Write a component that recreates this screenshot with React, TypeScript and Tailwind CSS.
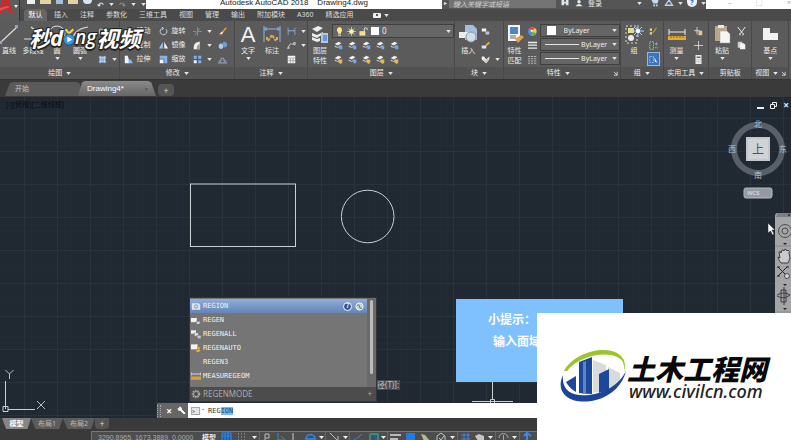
import { useEffect, useRef, type ReactNode } from "react";

// small ribbon glyphs, all on a 12x12 grid
const glyphs: Record<string, ReactNode> = {
  rect: <path d="M2 3h8v6H2z" fill="none" stroke="#d5d9dd" />,
  hatch: (
    <>
      <path d="M2 2h8v8H2z" fill="#8fb2e6" />
      <path d="M1 3h10M1 9h10M3 1v10M9 1v10" stroke="#dbe6f7" strokeWidth=".8" />
    </>
  ),
  ellipse: <ellipse cx="6" cy="6" rx="5" ry="3" fill="none" stroke="#d5d9dd" />,
  move: <path d="M6 1v10M1 6h10M4 3l2-2 2 2M4 9l2 2 2-2" fill="none" stroke="#cfe0f2" />,
  copy: (
    <>
      <circle cx="4" cy="5" r="3" fill="none" stroke="#cfd4da" />
      <circle cx="8" cy="7" r="3" fill="none" stroke="#8ab4ea" />
    </>
  ),
  stretch: (
    <>
      <path d="M1 1h4l2 7v3H1z" fill="#f0f4f8" />
      <path d="M6 6h3l3 5H6z" fill="#8ab8ef" />
    </>
  ),
  rotate: <path d="M9.500 3A4.500 4.500 0 1 1 5 1.500M3.500 0l2.500 1.500L4 4" fill="none" stroke="#c9d8e6" strokeWidth="1.200" />,
  mirror: (
    <>
      <path d="M5 1v9H0z" fill="#9cc3f2" />
      <path d="M7 1v9h5z" fill="#eef2f6" />
    </>
  ),
  scale: (
    <>
      <path d="M1 1h10v10H7V5H1z" fill="#86b1e8" />
      <path d="M1 6h5v5H1z" fill="#f2f5f8" />
    </>
  ),
  trim: <path d="M0 6h4M7 6h5M6 0v12M2 11L9 2" fill="none" stroke="#78a7df" strokeWidth=".9" />,
  fillet: (
    <>
      <path d="M1 11V8a7 7 0 0 1 7-7h1v10z" fill="#f1f1f1" />
      <path d="M5 11V8a5 5 0 0 1 4-4v7z" fill="#9a9a9a" />
    </>
  ),
  array: (
    <>
      <path d="M1 1h4v4H1zM7 1h4v4H7zM7 7h4v4H7z" fill="#7fb0f0" />
      <path d="M1 7h4v4H1z" fill="#e8f0fa" />
    </>
  ),
  erase: (
    <>
      <path d="M5 8l6-7" stroke="#e0a03a" strokeWidth="2" />
      <path d="M2 9l3-3 2 2-3 2z" fill="#f1e6d0" />
      <path d="M0 11h7" stroke="#e2473c" />
    </>
  ),
  explode: (
    <>
      <path d="M1 5l3-2 3 2v4l-3 2-3-2z" fill="#a8cbf1" />
      <path d="M6 2l3-1 3 2v4l-4 2z" fill="#6d9dd4" />
    </>
  ),
  offset: <path d="M0 10.500h12M1 8h3V6a2 2 0 1 1 4 0v2h3" fill="none" stroke="#a5b8d0" strokeWidth="1.300" />,
  linear: <path d="M1.500 1v10M10.500 1v10M2 5h8M3 4v2M9 4v2" stroke="#8fb9ec" fill="none" />,
  leader: <path d="M1 10l3-6h6M2 7l-1 3 3-1M9 2h2v3H9z" stroke="#dedede" fill="none" />,
  table: (
    <>
      <path d="M1 1h10v10H1z" fill="#f6f6f6" />
      <path d="M1 4h10M1 7.500h10M4.500 4v7M8 4v7" stroke="#777" strokeWidth=".7" />
    </>
  ),
  bulb: (
    <>
      <path d="M6 0a4 4 0 0 1 2 7v2H4V7a4 4 0 0 1 2-7z" fill="#ffe487" />
      <path d="M4 10h4v2H4z" fill="#b6c0cc" />
    </>
  ),
  sun: (
    <>
      <path d="M6 0v12M0 6h12M2 2l8 8M10 2l-8 8" stroke="#d8d8cd" />
      <circle cx="6" cy="6" r="3" fill="#fff5a7" />
    </>
  ),
  lock: (
    <>
      <path d="M7 6V3a2 2 0 0 1 4 0v1" fill="none" stroke="#e8e8e8" strokeWidth="1.300" />
      <path d="M1 6h7v5H1z" fill="#f5dd7b" stroke="#fff" strokeWidth=".6" />
    </>
  ),
  layerBlue: (
    <>
      <path d="M1 4l5-3 4 2-5 3z" fill="#f1f1f1" />
      <path d="M1 6l4 2 3-2v2L5 9 1 8z" fill="#c7ccd2" />
      <path d="M7 6h4v5H7z" fill="#76a9e6" />
    </>
  ),
  layerGold: (
    <>
      <path d="M1 4l5-3 4 2-5 3z" fill="#f1f1f1" />
      <path d="M1 6l4 2 3-2v2L5 9 1 8z" fill="#c7ccd2" />
      <path d="M6 6h5v4l-2 2-3-2z" fill="#eab94e" />
    </>
  ),
  blockNew: (
    <>
      <path d="M1 2h6v4H1z" fill="#f3f3f3" />
      <path d="M6 6h5v4H6z" fill="#b9c5d3" />
    </>
  ),
  blockEdit: (
    <>
      <path d="M1 6h6v4H1z" fill="#d7e3f1" />
      <path d="M5 6l5-5 2 2-5 4z" fill="#e8ae45" />
    </>
  ),
  blockAttr: (
    <>
      <path d="M1 2h3l3 4 4-4v4l-4 5-6-5z" fill="#f0f0f0" />
      <path d="M4 6l3 3 3-4" fill="none" stroke="#c98a34" />
    </>
  ),
  color: (
    <>
      <circle cx="6" cy="6" r="5.500" fill="#e9d44b" />
      <path d="M6 6L1 3A5.500 5.500 0 0 1 9 1.300z" fill="#e64c43" />
      <path d="M6 6v5.500A5.500 5.500 0 0 1 1 3z" fill="#4a8de2" />
      <path d="M6 6v5.500a5.500 5.500 0 0 0 5-3z" fill="#56b353" />
      <circle cx="5" cy="5" r="1.500" fill="#fff" />
    </>
  ),
  weight: <path d="M0 2h12M0 5.500h12M0 9.500h12" stroke="#efefef" strokeWidth="1.700" />,
  ltype: <path d="M0 2h12M0 5h12M0 8h12M0 11h12" stroke="#d0d0d0" strokeDasharray="3 1" strokeWidth="1" />,
  groupEdit: (
    <>
      <path d="M1 2h3v3H1zM1 7h3v3H1z" fill="#e7dc93" />
      <path d="M5 8l5-7" stroke="#d7a13c" strokeWidth="1.500" />
    </>
  ),
  groupBox: <path d="M1 1h5v10H1zM8 4h4M10 2v4M8 9h4" fill="none" stroke="#c3cad2" strokeDasharray="2 1" />,
  groupSel: (
    <>
      <path d="M1 2h5v8H1z" fill="none" stroke="#d8e8fb" strokeDasharray="1 1" />
      <path d="M7 3l4 7-3-1z" fill="#eef5ff" />
    </>
  ),
  pick: (
    <>
      <path d="M4 0v10M0 5h8" stroke="#eee" />
      <path d="M6 5h5v6H6z" fill="#e5c58c" />
    </>
  ),
  cross: <path d="M6 0v12M0 6h12" stroke="#e8e8e8" />,
  calc: (
    <>
      <path d="M2 0h8v12H2z" fill="#eaeaea" />
      <path d="M3.500 2h5v2h-5z" fill="#6a6a6a" />
      <path d="M3.500 6.500h5M3.500 9h5" stroke="#888" strokeDasharray="1 1" />
    </>
  ),
  cut: (
    <>
      <path d="M1 0l6 8M11 0L5 8" stroke="#f0f0f0" strokeWidth="1.300" />
      <path d="M3 8h2v3H3zM7 8h2v3H7z" fill="#d0d0d0" />
    </>
  ),
  clip: (
    <>
      <path d="M1 1h6v8H1z" fill="#cfcfcf" />
      <path d="M4 3h5l2 2v6H4z" fill="#f3f3f3" />
    </>
  ),
};

function Glyph({ name, className = "size-[9px]" }: { name: string; className?: string }) {
  return (
    <svg viewBox="0 0 12 12" className={`shrink-0 ${className}`} aria-hidden="true">
      {glyphs[name]}
    </svg>
  );
}

function Caret({ className = "" }: { className?: string }) {
  return (
    <svg viewBox="0 0 6 4" className={`h-[3px] w-[5px] shrink-0 ${className}`} aria-hidden="true">
      <path d="M0 0h6L3 4z" fill="#e6e6e6" />
    </svg>
  );
}

function Tool({
  icon,
  label,
  width,
  caret,
}: {
  icon: ReactNode;
  label: string[];
  width: string;
  caret?: boolean;
}) {
  return (
    <button type="button" className={`flex shrink-0 flex-col items-center ${width}`}>
      <svg viewBox="0 0 20 20" className="mb-0.5 size-5 shrink-0" aria-hidden="true">
        {icon}
      </svg>
      {label.map((line) => (
        <span key={line} className="leading-[10px] whitespace-nowrap">
          {line}
        </span>
      ))}
      {caret && <Caret className="mt-px" />}
    </button>
  );
}

function Mini({ name, label, caret }: { name: string; label?: string; caret?: boolean }) {
  return (
    <button
      type="button"
      aria-label={label ?? name}
      className="flex h-3.5 items-center gap-[3px] whitespace-nowrap"
    >
      <Glyph name={name} />
      {label && <span>{label}</span>}
      {caret && <Caret className="ml-0.5" />}
    </button>
  );
}

function Panel({
  title,
  grow,
  caret = true,
  launcher,
  children,
}: {
  title: string;
  grow: string;
  caret?: boolean;
  launcher?: boolean;
  children: ReactNode;
}) {
  return (
    <section className={`flex min-w-0 flex-col border-r border-[#484848] ${grow}`}>
      <div className="flex h-[47px] pt-[3px]">{children}</div>
      <div className="flex h-3 items-center bg-[#525252]">
        <span className="flex flex-1 items-center justify-center gap-1 whitespace-nowrap">
          {title}
          {caret && <Caret />}
        </span>
        {launcher && (
          <svg viewBox="0 0 6 6" className="mr-0.5 size-[5px] shrink-0" aria-hidden="true">
            <path d="M1 1l4 4M5 1v4H1" fill="none" stroke="#e6e6e6" />
          </svg>
        )}
      </div>
    </section>
  );
}

function PropertySelect({ label, swatch }: { label: string; swatch?: boolean }) {
  return (
    <div className="mb-px flex h-[13px] items-center gap-0.5 border border-[#3f3f3f] bg-[#656565] pr-0.5 pl-1">
      {swatch ? (
        <span className="ml-0.5 size-[9px] shrink-0 bg-white" />
      ) : (
        <span className="h-px flex-1 bg-[#e4e4e4]" />
      )}
      <select
        aria-label={label}
        className={`appearance-none bg-transparent text-[7px] outline-none ${swatch ? "flex-1 pl-1.5" : "mr-0.5"}`}
      >
        <option>ByLayer</option>
      </select>
      <Caret />
    </div>
  );
}

function TitleBar() {
  return (
    <header className="flex h-[9px] overflow-hidden bg-white">
      <div className="flex w-[146px] shrink-0 items-center gap-[5px] bg-[#545454] pl-[27px]">
        <span className="h-1 w-2 self-start bg-[#f0f0f0]" />
        <span className="h-1 w-3 self-start bg-[#e2d3a4]" />
        <span className="h-1 w-2 self-start bg-[#a7c0da]" />
        <span className="h-1 w-2.5 self-start bg-[#e2d3a4]" />
        <span className="h-1 w-2.5 self-start rounded-b bg-[#d6e4f2]" />
        <span className="text-[8px] leading-[6px] text-white">↶</span>
        <Caret />
        <span className="text-[8px] leading-[6px] text-[#999]">↷</span>
        <Caret />
        <Caret />
      </div>
      <h1 className="flex-1 text-center font-['Liberation_Sans',sans-serif] text-[8px] leading-[6px] whitespace-pre text-[#222]">
        {"Autodesk AutoCAD 2018    Drawing4.dwg"}
      </h1>
      <div className="flex w-[264px] shrink-0 bg-[#555]">
        <span className="w-[7px] text-center text-[6px] leading-[6px]">▸</span>
        <input
          aria-label="搜索"
          placeholder="键入关键字或短语"
          className="h-2 w-[107px] bg-[#747474] px-1 text-[7px] leading-[6px] italic outline-none placeholder:text-[#d0d0d0]"
        />
        <div className="flex flex-1 items-start gap-1 pl-1 leading-[7px]">
          <svg viewBox="0 0 10 8" className="h-[7px] w-2.5 shrink-0" aria-hidden="true">
            <path d="M1 0h3v6H1zM6 0h3v6H6zM4 2h2v2H4z" fill="#dce4ec" />
          </svg>
          <svg viewBox="0 0 10 8" className="h-[7px] w-2.5 shrink-0" aria-hidden="true">
            <circle cx="5" cy="2" r="2" fill="#e4eaf0" />
            <path d="M1 7q4-5 8 0z" fill="#e4eaf0" />
          </svg>
          <a href="#login" className="flex-1 whitespace-nowrap">
            登录
          </a>
          <Caret className="mt-0.5" />
          <svg viewBox="0 0 10 8" className="ml-1 h-[7px] w-2.5 shrink-0" aria-hidden="true">
            <path d="M1 0h8L8 4H3zM3 5h2v2H3zM6 5h2v2H6z" fill="#c5daf0" />
          </svg>
          <svg viewBox="0 0 10 8" className="h-[7px] w-2.5 shrink-0" aria-hidden="true">
            <path d="M5 0L1 6h8z" fill="none" stroke="#b8d4f2" strokeWidth="1.500" />
          </svg>
          <Caret className="mt-0.5" />
          <span className="h-[7px] w-2.5 shrink-0 rounded-b-full bg-[#eef4fa] text-center text-[7px] leading-[6px] font-bold text-[#2565a8]">
            ?
          </span>
          <Caret className="mt-0.5" />
        </div>
      </div>
      <div className="flex w-[85px] shrink-0 items-start justify-between pl-[22px] text-[7px] leading-[6px] text-[#aaa]">
        <span>–</span>
        <span>□</span>
        <span>×</span>
      </div>
    </header>
  );
}

function RibbonTabs() {
  const tabs = ["插入", "注释", "参数化", "三维工具", "视图", "管理", "输出", "附加模块", "A360", "精选应用"];
  return (
    <nav className="flex h-3 items-center bg-[#4a4a4a] pl-6">
      <a href="#home" className="mr-[7px] h-3 w-[23px] rounded-t-sm bg-[#666] text-center leading-[12px] text-white">
        默认
      </a>
      <div className="flex items-center gap-3">
        {tabs.map((tab) => (
          <a key={tab} href="#tab" className="leading-[12px] whitespace-nowrap text-[#dcdcdc]">
            {tab}
          </a>
        ))}
      </div>
      <span className="ml-[19px] flex items-center gap-[3px]">
        <span className="flex h-[5px] w-2 items-center justify-center rounded-[1px] bg-[#eee]">
          <span className="size-0.5 bg-[#555]" />
        </span>
        <Caret />
      </span>
    </nav>
  );
}

function Ribbon() {
  return (
    <div className="flex h-[59px] border-b border-[#333] bg-[#5b5b5b] pr-0.5 text-[#ececec]">
      <Panel title="绘图" grow="flex-[121_1_0%]">
        <Tool
          width="w-[18px]"
          label={["直线"]}
          icon={
            <>
              <path d="M2 18L18 3" stroke="#ddd" strokeWidth="1.200" />
              <path d="M0 17h3v3H0zM16 1h3v3h-3z" fill="#7fa9dc" />
            </>
          }
        />
        <Tool
          width="w-[30px]"
          label={["多段线"]}
          icon={<path d="M1 15h9q7-1 3-8L8 3" fill="none" stroke="#ddd" strokeWidth="1.200" />}
        />
        <Tool
          width="w-[18px]"
          label={["圆"]}
          caret
          icon={<circle cx="10" cy="10" r="8" fill="none" stroke="#ddd" />}
        />
        <Tool
          width="w-[28px]"
          label={["圆弧"]}
          caret
          icon={<path d="M2 18Q3 5 18 3" fill="none" stroke="#ddd" strokeWidth="1.200" />}
        />
        <div className="flex flex-col pl-1">
          <Mini name="rect" caret />
          <Mini name="ellipse" caret />
          <Mini name="hatch" caret />
        </div>
      </Panel>
      <Panel title="修改" grow="flex-[115_1_0%]">
        <div className="flex w-[37px] shrink-0 flex-col pl-1">
          <Mini name="move" label="移动" />
          <Mini name="copy" label="复制" />
          <Mini name="stretch" label="拉伸" />
        </div>
        <div className="flex w-[36px] shrink-0 flex-col pl-0.5">
          <Mini name="rotate" label="旋转" />
          <Mini name="mirror" label="镜像" />
          <Mini name="scale" label="缩放" />
        </div>
        <div className="flex w-[25px] shrink-0 flex-col">
          <Mini name="trim" caret />
          <Mini name="fillet" caret />
          <Mini name="array" caret />
        </div>
        <div className="flex flex-col">
          <Mini name="erase" />
          <Mini name="explode" />
          <Mini name="offset" />
        </div>
      </Panel>
      <Panel title="注释" grow="flex-[73_1_0%]">
        <Tool
          width="w-[26px]"
          label={["文字"]}
          caret
          icon={
            <text x="10" y="18" textAnchor="middle" fontSize="22" fill="#f4f4f4" fontFamily="Liberation Sans, sans-serif">
              A
            </text>
          }
        />
        <Tool
          width="w-[22px]"
          label={["标注"]}
          icon={
            <>
              <path d="M2 2v16M18 2v16M2 5h16M4 3v4M16 3v4" fill="none" stroke="#8db5e6" />
              <path d="M6 17l4-6 4 6M5 13v3M15 13v3" fill="none" stroke="#e3a948" strokeWidth="2" strokeDasharray="3 1" />
            </>
          }
        />
        <div className="flex flex-col pl-1">
          <Mini name="linear" caret />
          <Mini name="leader" caret />
          <Mini name="table" />
        </div>
      </Panel>
      <Panel title="图层" grow="flex-[148_1_0%]">
        <Tool
          width="w-[24px]"
          label={["图层", "特性"]}
          icon={
            <>
              <path d="M2 5l6-3 5 2-6 4zM2 9l5 2 6-3v2l-6 4-5-2zM2 13l5 2 3-1v3l-3 1-5-2z" fill="#ededed" />
              <path d="M11 9h7v10h-7z" fill="#a9c9ef" />
              <path d="M13 12h4M13 14h4M13 16h4" stroke="#35659e" />
            </>
          }
        />
        <div className="min-w-0 flex-1">
          <div className="flex h-3.5 items-center gap-[3px] border border-[#404040] bg-[#666] px-0.5">
            <Glyph name="bulb" />
            <Glyph name="sun" />
            <Glyph name="lock" />
            <span className="size-2 bg-white" />
            <select aria-label="图层" className="flex-1 appearance-none bg-transparent text-[8px] outline-none">
              <option>0</option>
            </select>
            <Caret />
          </div>
          {["状态", "编辑"].map((row, i) => (
            <div key={row} className="flex gap-[5px] pl-0.5">
              {[0, 1, 2, 3, 4].map((n) => (
                <Mini key={n} name={i === 1 && n !== 1 ? "layerGold" : "layerBlue"} />
              ))}
            </div>
          ))}
        </div>
      </Panel>
      <Panel title="块" grow="flex-[48_1_0%]">
        <Tool
          width="w-[26px]"
          label={["插入"]}
          icon={
            <>
              <path d="M7 1h8l4 4v11H7z" fill="#a3bfdb" />
              <path d="M1 8h10v6H1z" fill="#e8edf2" />
              <circle cx="13" cy="13" r="5" fill="#d3dde7" stroke="#8599ad" />
            </>
          }
        />
        <div className="flex flex-col">
          <Mini name="blockNew" />
          <Mini name="blockEdit" />
          <Mini name="blockAttr" caret />
        </div>
      </Panel>
      <Panel title="特性" grow="flex-[118_1_0%]" launcher>
        <Tool
          width="w-[22px]"
          label={["特性", "匹配"]}
          icon={
            <>
              <path d="M3 1h12v16H3z" fill="#f2f4f6" />
              <path d="M5 3h8v7H5z" fill="#4b86c8" />
              <path d="M5 12h6M5 14h6" stroke="#666" />
              <path d="M10 15l6-4 3 2-6 6z" fill="#d9a24b" />
            </>
          }
        />
        <div className="flex w-[14px] shrink-0 flex-col items-center">
          <Mini name="color" />
          <Mini name="weight" />
          <Mini name="ltype" />
        </div>
        <div className="min-w-0 flex-1">
          <PropertySelect label="对象颜色" swatch />
          <PropertySelect label="线宽" />
          <PropertySelect label="线型" />
        </div>
      </Panel>
      <Panel title="组" grow="flex-[42_1_0%]">
        <Tool
          width="w-[26px]"
          label={["组"]}
          icon={
            <>
              <path d="M2 2h11v17H2z" fill="none" stroke="#ddd" strokeDasharray="2 2" />
              <path d="M4 4h6v5H4z" fill="#e6dc8e" />
              <circle cx="7" cy="14" r="3" fill="#eee" />
              <path d="M14 1v12M8 7h12M10 3l8 8M18 3l-8 8" stroke="#a9d6fb" />
              <circle cx="14" cy="7" r="2" fill="#fff" />
            </>
          }
        />
        <div className="flex flex-col items-center">
          <Mini name="groupEdit" />
          <Mini name="groupBox" />
          <span className="flex h-3.5 w-[13px] items-center justify-center border border-[#8fb9ea] bg-[#3d74b8]">
            <Mini name="groupSel" />
          </span>
        </div>
      </Panel>
      <Panel title="实用工具" grow="flex-[45_1_0%]">
        <Tool
          width="w-[26px]"
          label={["测量"]}
          caret
          icon={
            <>
              <path d="M2 5v6M18 5v6M2 8h16" stroke="#f0f0f0" fill="none" />
              <path d="M1 12h18v4H1z" fill="#e5a92f" />
              <path d="M4 12v2M7 12v2M10 12v2M13 12v2M16 12v2" stroke="#8d6415" />
            </>
          }
        />
        <div className="flex flex-col pl-1">
          <Mini name="pick" />
          <Mini name="cross" />
          <Mini name="calc" />
        </div>
      </Panel>
      <Panel title="剪贴板" grow="flex-[43_1_0%]" caret={false}>
        <Tool
          width="w-[26px]"
          label={["粘贴"]}
          caret
          icon={
            <>
              <path d="M3 2h12v15H3z" fill="#b9a78d" />
              <path d="M6 1h6v3H6z" fill="#e8e8e8" />
              <path d="M8 7h7l3 3v9H8z" fill="#f5f5f5" stroke="#999" strokeWidth=".5" />
            </>
          }
        />
        <div className="flex flex-col pl-0.5">
          <Mini name="cut" />
          <Mini name="clip" />
        </div>
      </Panel>
      <Panel title="视图" grow="flex-[36_1_0%]" launcher>
        <Tool
          width="w-full"
          label={["基点"]}
          caret
          icon={<path d="M3 4h7v5h8v7H3z" fill="#f1f1f1" />}
        />
      </Panel>
    </div>
  );
}

function DocumentTabs() {
  return (
    <div className="flex h-[17px] items-end bg-[#3a3a3a] pb-px pl-[5px] text-[8px]">
      <button
        type="button"
        className="h-3.5 w-[77px] bg-[#5a5a5a] pl-2.5 text-left text-[7px] text-[#c4c4c4] [clip-path:polygon(0_100%,6%_10%,10%_0,93%_0,97%_10%,100%_100%)]"
      >
        开始
      </button>
      <button
        type="button"
        className="-ml-1 flex h-[15px] w-[78px] items-center justify-between bg-linear-to-b from-[#8a8a8a] to-[#666] pr-2 pl-[9px] font-['Liberation_Sans',sans-serif] text-white [clip-path:polygon(0_100%,5%_10%,9%_0,90%_0,94%_10%,100%_100%)]"
      >
        Drawing4*
        <span className="text-[6px] text-[#444]">×</span>
      </button>
      <button
        type="button"
        className="ml-0.5 h-3 w-4 rounded-sm bg-[#555] text-center leading-[11px] text-[#ddd]"
      >
        +
      </button>
    </div>
  );
}

function ViewCube() {
  return (
    <svg viewBox="0 0 64 84" className="absolute top-[19px] right-px h-[84px] w-16" aria-label="ViewCube">
      <circle cx="32" cy="33" r="24" fill="none" stroke="#596069" strokeWidth="6" />
      <path d="M20 21h24v24H20z" fill="#c3c6ca" />
      <path d="M22 23h20v20H22z" fill="#d0d3d6" />
      <g fill="#bcc1c6" fontSize="8" textAnchor="middle" fontFamily="Noto Sans CJK SC, sans-serif">
        <text x="32" y="11">北</text>
        <text x="6" y="36">西</text>
        <text x="57" y="36">东</text>
        <text x="32" y="62">南</text>
        <text x="32" y="38" fontSize="12" fill="#4d5560">上</text>
      </g>
      <rect x="18" y="72" width="28" height="10" rx="2" fill="#949aa2" stroke="#b5bac0" />
      <text x="21" y="79" fontSize="6" fill="#e4e7ea" fontFamily="Noto Sans, sans-serif">
        WCS
      </text>
    </svg>
  );
}

function NavigationBar() {
  return (
    <svg viewBox="0 0 16 104" className="absolute top-[116px] right-0 h-[104px] w-4" aria-label="导航栏">
      <path d="M0 3q0-3 3-3h13v104H0z" fill="#a4a5a7" />
      <path d="M3 0h13v4H1z" fill="#7c7e82" />
      <path d="M13 1l2 2M15 1l-2 2" stroke="#222" strokeWidth=".7" />
      <g fill="none" stroke="#4b4d50">
        <circle cx="10" cy="18" r="6.500" />
        <circle cx="10" cy="18" r="3" />
        <path d="M0 33h16M0 99h16" stroke="#88898c" />
        <path
          d="M6 50q-3-4-3-6l2 1-1-6q2-1 2 1l1-3q1-1 2 1l1-2q1 0 2 2l1-1q2 1 1 3l1 5-2 5z"
          fill="#c9cacc"
          stroke="#333"
          strokeWidth=".9"
        />
        <path d="M3 54l9 9M12 54l-9 9M2 54h3M11 54h3M2 63h3" stroke="#222" />
        <circle cx="12" cy="63" r="2.500" fill="#cfd2d5" />
        <path d="M9 74v18M2 82q7-4 13 0q-6 5-13 1M6 77h5v12H6z" stroke="#3a3c40" />
      </g>
      <path d="M8 30h4l-2 2zM8 71h4l-2 2zM8 95h4l-2 2z" fill="#222" />
    </svg>
  );
}

const suggestions = ["REGION", "REGEN", "REGENALL", "REGENAUTO", "REGEN3", "MEASUREGEOM"];

function SuggestionIcon({ name }: { name: string }) {
  if (name === "REGEN3") return <span className="w-2.5" />;
  return (
    <svg viewBox="0 0 12 10" className="h-[9px] w-2.5 shrink-0" aria-hidden="true">
      {name === "REGION" && (
        <>
          <path d="M1 1h8l2 2v6H1z" fill="#dde6f2" />
          <circle cx="6" cy="5" r="2" fill="none" stroke="#6984b0" />
        </>
      )}
      {name === "MEASUREGEOM" && (
        <>
          <path d="M0 0v4M12 0v4M0 2h12" stroke="#eee" />
          <path d="M0 5h12v4H0z" fill="#d99f35" />
        </>
      )}
      {name === "REGEN" && (
        <>
          <path d="M0 2h7v5H0z" fill="#f2f2f2" />
          <path d="M6 6h5v3l-4 1z" fill="#d4d9de" stroke="#555" strokeWidth=".5" />
        </>
      )}
      {name === "REGENALL" && (
        <>
          <path d="M0 0h6v4H0z" fill="#f2f2f2" />
          <path d="M4 3h5v4H4z" fill="#dfe2e5" stroke="#666" strokeWidth=".5" />
          <path d="M7 6h5v4H8z" fill="#c8cdd2" stroke="#555" strokeWidth=".5" />
        </>
      )}
      {name === "REGENAUTO" && (
        <>
          <path d="M0 0h8v6H0z" fill="#f2f2f2" />
          <path d="M8 2l4 2-2 2 2 2-4 2-3-2 3-2z" fill="#e6b23c" stroke="#555" strokeWidth=".4" />
        </>
      )}
    </svg>
  );
}

function SuggestionList() {
  return (
    <div className="absolute bottom-4 left-[189px] w-[188px] border border-[#353535] bg-[#757575] font-['DejaVu_Sans_Mono',monospace] text-[7px] text-[#f0f0f0]">
      <div className="flex h-[89px]">
        <ul className="flex-1 pt-px">
          {suggestions.map((name, i) => (
            <li key={name}>
              <button
                type="button"
                className={`flex h-3.5 w-full items-center gap-0.5 pl-px ${
                  i === 0 ? "bg-linear-to-b from-[#90aedb] to-[#6585b7]" : ""
                }`}
              >
                <SuggestionIcon name={name} />
                <span className="flex-1 text-left">{name}</span>
                {i === 0 && (
                  <>
                    <span className="size-[9px] rounded-full border border-white bg-[#32568f] text-center leading-[7px] font-bold">
                      ?
                    </span>
                    <svg viewBox="0 0 10 10" className="mr-[3px] ml-px size-[9px]" aria-hidden="true">
                      <circle cx="5" cy="5" r="4" fill="#c3d3dc" stroke="#fff" />
                      <path d="M2 4q3-2 3 1t3 2" fill="none" stroke="#3f6b68" />
                    </svg>
                  </>
                )}
              </button>
            </li>
          ))}
        </ul>
        <div className="w-[9px] bg-[#6a6a6a] px-[3px] pt-0.5">
          <div className="h-[74px] w-[3px] rounded bg-[#bdbdbd]" />
        </div>
      </div>
      <div className="flex h-3.5 items-center gap-0.5 bg-[#4c4c4c] pr-0.5 pl-px font-['Noto_Sans',sans-serif] text-[8px] text-[#aaa]">
        <svg viewBox="0 0 10 10" className="size-2.5" aria-hidden="true">
          <circle cx="5" cy="5" r="3.500" fill="none" stroke="#aaa" strokeWidth="1.500" strokeDasharray="1.500 1" />
          <circle cx="5" cy="5" r="2.500" fill="none" stroke="#aaa" />
        </svg>
        <span className="flex-1">REGENMODE</span>
        <span className="pr-0.5">+</span>
      </div>
    </div>
  );
}

function CommandLine() {
  const input = useRef<HTMLInputElement>(null);

  // keep the auto-completed part selected
  useEffect(() => {
    input.current?.focus();
    input.current?.setSelectionRange(3, 6);
  }, []);

  return (
    <div className="absolute right-0 bottom-0 left-[157px] flex h-[15px] items-center bg-white">
      <div className="flex h-full w-[31px] items-center bg-[#666] text-white">
        <span className="h-3 w-1 border-x border-dotted border-[#aaa]" />
        <button type="button" aria-label="关闭" className="w-4 text-[10px] leading-[10px] font-bold">
          ×
        </button>
        <svg viewBox="0 0 10 10" className="size-[9px]" aria-hidden="true">
          <path d="M1 3a2.500 2.500 0 0 0 3 2l4 4 1-1-4-4a2.500 2.500 0 0 0-2-3v2z" fill="#fff" stroke="#fff" />
        </svg>
      </div>
      <span className="ml-[3px] h-2 w-[9px] border border-[#aaa] bg-[#e4e6e8] font-['DejaVu_Sans_Mono',monospace] text-[5px] leading-[6px] text-[#444]">
        &gt;_
      </span>
      <label htmlFor="command" className="w-2 pl-0.5 text-[6px] leading-[6px] text-[#333]">
        ˇ
      </label>
      <input
        id="command"
        ref={input}
        defaultValue="REGION"
        className="h-3 min-w-0 flex-1 font-['DejaVu_Sans_Mono',monospace] text-[7px] text-[#333] caret-transparent outline-none selection:bg-[#7fb7ee] selection:text-[#17466f]"
      />
    </div>
  );
}

function DrawingArea() {
  return (
    <main className="relative min-h-0 flex-1 overflow-hidden bg-[#202831]">
      <svg className="absolute inset-0 size-full" aria-hidden="true">
        <defs>
          <pattern id="grid" x="24" y="21" width="33" height="33" patternUnits="userSpaceOnUse">
            <path
              d="M7 0v33M14 0v33M20 0v33M27 0v33M0 7h33M0 14h33M0 20h33M0 27h33"
              stroke="#222b34"
              shapeRendering="crispEdges"
            />
            <path d="M.5 0v33M0 .5h33" stroke="#29333c" />
          </pattern>
        </defs>
        <rect width="100%" height="100%" fill="url(#grid)" />
        <g fill="none" stroke="#c9ced1">
          <rect x="190.500" y="87" width="105" height="62.500" />
          <circle cx="367.700" cy="119.500" r="26.300" />
          <path d="M5.500 284v28M8 312.500h27M3 309.500h5v5H3z" />
          <path d="M5.500 273l4 4 4-4M9.500 277v5M37 304l8 8M45 304l-8 8" strokeWidth=".9" />
          <path d="M492.500 284v19M472 304.500h41M490.500 302.500h4v4h-4z" />
        </g>
        <path
          d="M768 126v10l2.500-2 2 4 1.500-1-2-4h3z"
          fill="#fff"
          stroke="#222"
          strokeWidth=".5"
        />
      </svg>
      <span className="absolute top-1 left-1.5 text-[7px] leading-[8px] text-[#080b0f]">
        [-][俯视][二维线框]
      </span>
      <div className="absolute top-1 right-0.5 flex items-center gap-1.5 text-[#eee]">
        <button type="button" aria-label="最小化" className="mt-1 h-0.5 w-[7px] bg-[#eee]" />
        <button type="button" aria-label="还原" className="size-[7px]">
          <svg viewBox="0 0 7 7" aria-hidden="true">
            <path d="M2.500 2V.5h4v4H5M.5 2.500h4v4h-4z" fill="none" stroke="#eee" />
          </svg>
        </button>
        <button type="button" aria-label="关闭" className="text-[10px] leading-[9px] font-bold">
          ×
        </button>
      </div>
      <ViewCube />
      <NavigationBar />
      <div className="absolute bottom-7 left-[376px] bg-[#454b52] px-px text-[8px] leading-[10px] text-[#c3c3c3]">
        径(T)]:
      </div>
      <SuggestionList />
      <div className="absolute bottom-9 left-[456px] h-[83px] w-[167px] bg-[#7fc0ff] pt-[9px] font-['Noto_Sans_CJK_SC',sans-serif] text-[12px] leading-[22px] font-bold text-white">
        <p className="pl-8">小提示：</p>
        <p className="pl-[37px]">输入面域</p>
      </div>
      <CommandLine />
    </main>
  );
}

function LayoutTabs() {
  return (
    <div className="flex h-[13px] items-start bg-[#3a3a3a] pl-0.5">
      {["模型", "布局1", "布局2"].map((tab, i) => (
        <button
          key={tab}
          type="button"
          className={`h-[11px] [clip-path:polygon(0_0,100%_0,88%_100%,14%_100%)] ${
            i === 0 ? "w-[29px] bg-[#858585] font-bold text-white" : "w-8 bg-[#5c5c5c] text-[#bbb]"
          }`}
        >
          {tab}
        </button>
      ))}
      <button type="button" className="h-[11px] w-3.5 rounded-b bg-[#555] text-[8px] leading-[10px] text-[#ddd]">
        +
      </button>
    </div>
  );
}

// each status toggle is cut off by the lower edge of the window
const toggles: { id: string; width: string; icon: ReactNode }[] = [
  { id: "grid", width: "w-[15px]", icon: <path d="M1 1h9v9H1zM4 1v9M7 1v9M1 4h9" stroke="#2f8bf5" fill="#1d5aa5" /> },
  { id: "snap", width: "w-4", icon: <path d="M1 2h9M1 5h9M1 8h9" stroke="#aaa" strokeDasharray="1 2" /> },
  { id: "snap-menu", width: "w-2.5", icon: <path d="M3 4h5L5.500 7z" fill="#eee" /> },
  { id: "infer", width: "w-[14px]", icon: <path d="M3 10V2h4v4H3" stroke="#bbb" fill="none" /> },
  { id: "dyn", width: "w-[14px]", icon: <path d="M2 1v7h8M5 4l3 3" stroke="#2f8bf5" fill="none" /> },
  { id: "ortho", width: "w-[14px]", icon: <path d="M3 1v8h7" stroke="#ccc" fill="none" /> },
  { id: "polar", width: "w-[16px]", icon: <path d="M1 7a4.500 4.500 0 1 1 9 0M0 7h11" stroke="#2f8bf5" fill="none" strokeWidth="1.500" /> },
  { id: "polar-menu", width: "w-2", icon: <path d="M3 4h5L5.500 7z" fill="#eee" /> },
  { id: "iso", width: "w-4", icon: <path d="M1 1l8 8M9 4v5" stroke="#bbb" /> },
  { id: "iso-menu", width: "w-2", icon: <path d="M3 4h5L5.500 7z" fill="#eee" /> },
  { id: "track", width: "w-4", icon: <path d="M1 9l8-7M2 6v3h3" stroke="#2f8bf5" /> },
  { id: "osnap", width: "w-3.5", icon: <path d="M2 2h8v8M2 2v7" stroke="#36a26b" fill="#245d9d" strokeWidth="1.500" /> },
  { id: "osnap-menu", width: "w-2", icon: <path d="M3 4h5L5.500 7z" fill="#eee" /> },
  { id: "weight", width: "w-[15px]", icon: <path d="M0 3h11M0 7h8" stroke="#ddd" strokeWidth="1.500" /> },
  { id: "transparency", width: "w-[15px]", icon: <path d="M1 1h9v9H1z" fill="#247ae0" /> },
  { id: "cycle", width: "w-3.5", icon: <path d="M1 2l4 1 5 6H4z" fill="#b8bc8b" /> },
  { id: "osnap3d", width: "w-4", icon: <path d="M2 4l4-3 4 3v5H2zM4 6l2 2 3-4" stroke="#b9c7bd" fill="none" /> },
  { id: "osnap3d-menu", width: "w-2.5", icon: <path d="M3 4h5L5.500 7z" fill="#eee" /> },
  { id: "ucs", width: "w-3.5", icon: <path d="M1 3h9M1 7h9M4 1v9M8 1v9" stroke="#2f8bf5" /> },
  { id: "filter", width: "w-3.5", icon: <path d="M1 4l4-2 5 2v5H4z" fill="#c5c5c5" /> },
  { id: "filter-menu", width: "w-2.5", icon: <path d="M3 4h5L5.500 7z" fill="#eee" /> },
  { id: "gizmo", width: "w-3.5", icon: <path d="M1 6a4.500 4.500 0 1 1 9 0M5.500 3v6" stroke="#aaa" fill="none" /> },
  { id: "gizmo-menu", width: "w-2.5", icon: <path d="M3 4h5L5.500 7z" fill="#eee" /> },
  { id: "scale", width: "w-3.5", icon: <path d="M5 1v9M2 4l3-3 4 3" stroke="#2f8bf5" strokeWidth="2" fill="none" /> },
];

function StatusBar() {
  return (
    <footer className="flex h-[9px] overflow-hidden bg-[#3a3a3a] pl-[91px]">
      <div className="flex flex-1 items-start border-t border-l border-[#777] bg-[#4d4d4d] pl-1.5">
        <span className="w-[104px] pt-0.5 font-['Liberation_Sans',sans-serif] text-[7px] leading-[8px] whitespace-nowrap text-[#aaa]">
          3290.8965, 1673.3889, 0.0000
        </span>
        <button type="button" className="w-[17px] pt-0.5 text-left leading-[8px] font-bold text-[#eee]">
          模型
        </button>
        {toggles.map((toggle) => (
          <button
            key={toggle.id}
            type="button"
            aria-label={toggle.id}
            className={`flex shrink-0 justify-center ${toggle.width} ${
              toggle.id.endsWith("menu") ? "border-r border-[#666]" : ""
            }`}
          >
            <svg viewBox="0 0 11 11" className="size-[11px] shrink-0" aria-hidden="true">
              {toggle.icon}
            </svg>
          </button>
        ))}
      </div>
    </footer>
  );
}

function VideoBrand() {
  return (
    <div className="absolute top-[23px] left-[29px] flex items-center font-['Noto_Sans_CJK_SC',sans-serif] text-[22px] leading-[28px] font-bold text-white italic [text-shadow:1px_1px_0_#222,-1px_-1px_0_#222,1px_-1px_0_#222,-1px_1px_0_#222,0_2px_1px_#222]">
      秒
      <span className="-ml-px font-['Open_Sans',sans-serif]">d</span>
      <svg viewBox="0 0 14 22" className="h-[22px] w-3 shrink-0" aria-hidden="true">
        <path d="M3 2l4 5 5-5" fill="none" stroke="#f4d13b" strokeWidth="2.500" />
        <circle cx="7" cy="14" r="6.500" fill="#3394ee" stroke="#222" strokeWidth=".6" />
        <path d="M5 10.500v7l6-3.500z" fill="#fff" />
      </svg>
      <span className="font-['Open_Sans',sans-serif] text-[19px] font-semibold">ng</span>
      视频
    </div>
  );
}

function SiteBrand() {
  return (
    <aside className="absolute right-0 bottom-0 flex h-[127px] w-[254px] items-start bg-white pt-[34px] pl-[22px]">
      <svg viewBox="0 0 70 56" className="h-14 w-[70px] shrink-0" aria-hidden="true">
        <path d="M34 13l13 5v25l-13 3zM49 20l12 6v9q-5 5-12 8z" fill="#d8dadd" />
        <path d="M7 35l10-6v16q-6-3-10-10z" fill="#1d479b" />
        <path d="M20 15l13-5v37q-7 0-13-1z" fill="#1d479b" />
        <path d="M24 15l3-1v33h-3z" fill="#5d84c5" />
        <path d="M40 27l10-5v21l-10 3z" fill="#1d479b" />
        <path
          d="M5 24C15 5 48-3 61 8q7 6 4 17 1-11-5-14C48 3 19 9 8 24z"
          fill="#9bc52b"
        />
        <path
          d="M4 28C-5 47 13 59 37 53 53 49 64 37 67 24 60 38 46 46 30 48 14 50 2 44 4 28z"
          fill="#1c449a"
        />
      </svg>
      <div className="-ml-0.5 pt-2 italic text-[#080808]">
        <p className="font-['Noto_Sans_CJK_SC',sans-serif] text-[28px] leading-[27px] font-black whitespace-nowrap">
          土木工程网
        </p>
        <a
          href="#civilcn"
          className="block pl-0.5 font-['Noto_Sans',sans-serif] text-[18px] leading-[18px] font-medium text-[#222]"
        >
          www.civilcn.com
        </a>
      </div>
    </aside>
  );
}

export default function App() {
  return (
    <div className="relative flex h-screen flex-col overflow-hidden bg-[#3a3a3a] font-['Noto_Sans','Noto_Sans_CJK_SC',sans-serif] text-[7px] leading-[10px] text-[#e8e8e8]">
      <TitleBar />
      <RibbonTabs />
      <Ribbon />
      <DocumentTabs />
      <DrawingArea />
      <LayoutTabs />
      <StatusBar />
      <button
        type="button"
        aria-label="应用程序菜单"
        className="absolute top-0 left-0 h-[21px] w-5 border-r border-[#333] bg-[#5d5d5d]"
      >
        <svg viewBox="0 0 20 21" className="h-[21px] w-5" aria-hidden="true">
          <path d="M-2 13L3-2h5l5 15H9L8 9H4l-2 4z" fill="#c92b2c" />
          <path d="M0 8l7-2 3 1-6 2-4 2z" fill="#e05552" />
          <path d="M14 5h4l-2 3z" fill="#eee" />
        </svg>
      </button>
      <VideoBrand />
      <SiteBrand />
    </div>
  );
}
